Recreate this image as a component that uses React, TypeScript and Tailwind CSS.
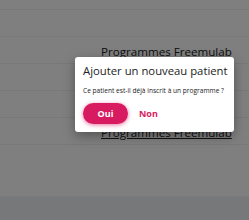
export default function App() {
  const rows = [10, 27, 27, 27, 27, 27]

  return (
    <div className="relative w-[249px] h-[220px] overflow-hidden bg-white font-['Open_Sans',sans-serif]">
      {/* page beneath the overlay */}
      <div className="flex flex-col h-full">
        {rows.map((h, i) => (
          <div
            key={i}
            style={{ height: h }}
            className="flex items-center pl-[101px] pt-[4px] border-b border-[#f0f0f0]"
          >
            {(i === 2 || i === 5) && (
              <span className="text-[11.6px] leading-[14px] text-[#222] underline whitespace-nowrap">
                Programmes Freemulab
              </span>
            )}
          </div>
        ))}
        <div className="flex-1 border-b border-[#f4f4f4]" />
        <div className="h-[23px] bg-[#eef0f4]" />
      </div>

      {/* overlay */}
      <div className="absolute inset-0 bg-black/50" />

      {/* dialog */}
      <div className="absolute left-[75px] top-[57px] w-[159px] h-[75px] bg-white rounded-[3px] shadow-[0_4px_12px_rgba(0,0,0,0.35)] px-[8px] pt-[5px]">
        <h2 className="text-[11.3px] leading-[18px] text-[#222] whitespace-nowrap">
          Ajouter un nouveau patient
        </h2>
        <p className="mt-[6px] text-[6.6px] leading-[10px] text-[#222] whitespace-nowrap">
          Ce patient est-il déjà inscrit à un programme ?
        </p>
        <div className="mt-[7px] flex items-center gap-[11px]">
          <button className="w-[45px] h-[21px] rounded-full bg-[#d81b60] text-white text-[9px] font-bold shadow-[0_1px_4px_rgba(216,27,96,0.6)]">
            Oui
          </button>
          <button className="text-[#d81b60] text-[9px] font-bold">Non</button>
        </div>
      </div>
    </div>
  )
}
